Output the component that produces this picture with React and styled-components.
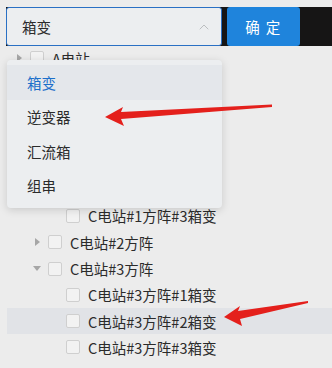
import React from 'react';
import styled, { createGlobalStyle } from 'styled-components';
import { ChevronUp } from 'lucide-react';

const GlobalStyle = createGlobalStyle`
  body {
    margin: 0;
    background: #ececec;
    font-family: "Noto Sans CJK SC", "Liberation Sans", sans-serif;
  }
`;

const options = ['箱变', '逆变器', '汇流箱', '组串'];

const rows = [
  { label: 'A电站', level: 0, toggle: 'closed' },
  { label: 'B电站', level: 0, toggle: 'closed' },
  { label: 'C电站', level: 0, toggle: 'open' },
  { label: 'C电站#1方阵', level: 1, toggle: 'open' },
  { label: 'C电站#1方阵#1箱变', level: 2 },
  { label: 'C电站#1方阵#2箱变', level: 2 },
  { label: 'C电站#1方阵#3箱变', level: 2 },
  { label: 'C电站#2方阵', level: 1, toggle: 'closed' },
  { label: 'C电站#3方阵', level: 1, toggle: 'open' },
  { label: 'C电站#3方阵#1箱变', level: 2 },
  { label: 'C电站#3方阵#2箱变', level: 2, active: true },
  { label: 'C电站#3方阵#3箱变', level: 2 },
];

const App = () => (
  <Page>
    <GlobalStyle />
    <Toolbar>
      <Select>
        <span>箱变</span>
        <ChevronUp size={16} strokeWidth={1.1} color="#a9abae" />
      </Select>
      <Confirm>确 定</Confirm>
    </Toolbar>

    <Tree>
      {rows.map((r) => (
        <Row key={r.label} level={r.level} active={r.active}>
          <Toggle>{r.toggle && <Caret open={r.toggle === 'open'} />}</Toggle>
          <Check />
          <Label>{r.label}</Label>
        </Row>
      ))}
    </Tree>

    <Menu>
      {options.map((o, i) => (
        <MenuItem key={o} selected={i === 0}>{o}</MenuItem>
      ))}
    </Menu>

    <Marks viewBox="0 0 332 368" width="332" height="368">
      <polygon
        fill="#e4201c"
        points="105,117 123,107 121,112 272,104.5 272,107 121,119 124,126"
      />
      <polygon
        fill="#e4201c"
        points="224,317 240,306 238,311 308,301 308,303 240,319 242,326"
      />
    </Marks>
  </Page>
);

const Page = styled.div`
  position: relative;
  width: 332px;
  height: 368px;
  overflow: hidden;
  padding-top: 7px;
  box-sizing: border-box;
`;

const Toolbar = styled.div`
  display: flex;
  gap: 5px;
  height: 39px;
  margin-left: 6px;
  background: #161515;
`;

const Select = styled.div`
  display: flex;
  align-items: center;
  justify-content: space-between;
  width: 216px;
  box-sizing: border-box;
  padding: 0 9px 0 15px;
  border: 1px solid #2a70c4;
  border-radius: 3px;
  background: #eceef0;
  font-size: 14.5px;
  color: #2b2b2b;
`;

const Confirm = styled.button`
  width: 73px;
  border: none;
  border-radius: 3px;
  background: #1f84dc;
  color: #fff;
  font-family: inherit;
  font-size: 14.5px;
  letter-spacing: 1.5px;
`;

const Tree = styled.div`
  display: flex;
  flex-direction: column;
  margin: -1px 0 0 7px;
`;

const Row = styled.div`
  display: flex;
  align-items: center;
  height: 26.3px;
  padding-left: ${(p) => 5 + p.level * 18}px;
  background: ${(p) => (p.active ? '#e1e3e7' : 'transparent')};
`;

const Toggle = styled.span`
  display: flex;
  align-items: center;
  justify-content: center;
  width: 14px;
  height: 14px;
  margin-right: 4px;
`;

const Caret = styled.span`
  width: 0;
  height: 0;
  ${(p) =>
    p.open
      ? 'border-left: 4px solid transparent; border-right: 4px solid transparent; border-top: 5px solid #a6a6a6;'
      : 'border-top: 4px solid transparent; border-bottom: 4px solid transparent; border-left: 5px solid #a6a6a6;'}
`;

const Check = styled.span`
  width: 14px;
  height: 14px;
  box-sizing: border-box;
  border: 1px solid #cfcfcf;
  border-radius: 2px;
  background: #f2f2f2;
  margin-right: 8px;
`;

const Label = styled.span`
  font-size: 14.5px;
  color: #2b2b2b;
  white-space: nowrap;
`;

const Menu = styled.div`
  position: absolute;
  left: 7px;
  top: 60px;
  width: 215px;
  height: 148px;
  box-sizing: border-box;
  padding: 5px 0;
  border-radius: 4px;
  background: #eceef0;
  box-shadow: 0 2px 8px rgba(0, 0, 0, 0.15);
  display: flex;
  flex-direction: column;
`;

const MenuItem = styled.div`
  display: flex;
  align-items: center;
  height: 34.5px;
  padding-left: 20px;
  font-size: 14.5px;
  color: ${(p) => (p.selected ? '#1c6fca' : '#2b2b2b')};
  background: ${(p) => (p.selected ? '#e4e7eb' : 'transparent')};
`;

const Marks = styled.svg`
  position: absolute;
  left: 0;
  top: 0;
  pointer-events: none;
`;

export default App;
